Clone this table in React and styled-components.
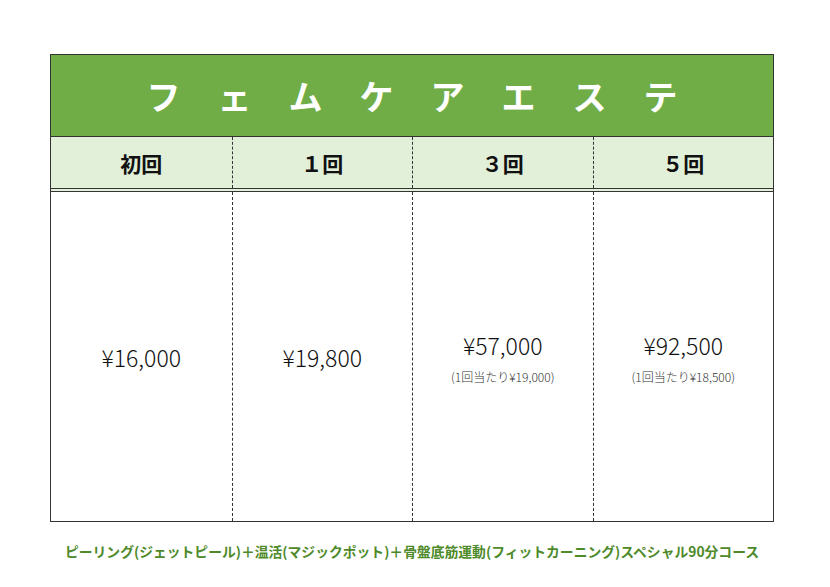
import React from 'react';
import styled, { createGlobalStyle } from 'styled-components';

const GlobalStyle = createGlobalStyle`
	body {
		margin: 0;
		background: #ffffff;
		font-family: "Noto Sans CJK JP", "Noto Sans", sans-serif;
	}
`;

const Page = styled.div`
	width: 830px;
	height: 587px;
	padding: 54px 56px 0 50px;
	box-sizing: border-box;
	display: flex;
	flex-direction: column;
`;

const Table = styled.div`
	width: 724px;
	border: 1.5px solid #333;
	box-sizing: border-box;
`;

const Title = styled.div`
	height: 81px;
	background: #70ad47;
	color: #fff;
	display: flex;
	align-items: center;
	justify-content: center;
	font-size: 34px;
	font-weight: 700;
	letter-spacing: 37px;
	padding-left: 37px;
	box-sizing: border-box;
`;

const Row = styled.div`
	display: grid;
	grid-template-columns: repeat(4, 1fr);
	height: ${(p) => p.$h}px;
	background: ${(p) => p.$bg || '#fff'};
	border-top: ${(p) => p.$top || 'none'};
	border-bottom: ${(p) => p.$bottom || 'none'};
	box-sizing: border-box;
`;

const Cell = styled.div`
	display: flex;
	flex-direction: column;
	align-items: center;
	justify-content: center;
	border-left: ${(p) => (p.$first ? 'none' : '1px dashed #333')};
`;

const Head = styled.span`
	font-size: 21px;
	font-weight: 700;
	color: #111;
`;

const Price = styled.span`
	font-size: 23px;
	font-weight: 300;
	color: #111;
`;

const Note = styled.span`
	font-size: 12px;
	font-weight: 300;
	color: #333;
	margin-top: 6px;
`;

const Footer = styled.div`
	margin-top: 19px;
	width: 724px;
	text-align: center;
	color: #4e8a2a;
	font-size: 13.8px;
	font-weight: 700;
`;

const cols = [
	{ head: '初回', price: '¥16,000' },
	{ head: '１回', price: '¥19,800' },
	{ head: '３回', price: '¥57,000', note: '(1回当たり¥19,000)' },
	{ head: '５回', price: '¥92,500', note: '(1回当たり¥18,500)' },
];

export default function App() {
	return (
		<Page>
			<GlobalStyle />
			<Table>
				<Title>フェムケアエステ</Title>
				<Row $h={56} $bg="#e2efd9" $top="1.5px solid #333" $bottom="4px double #333">
					{cols.map((c, i) => (
						<Cell key={c.head} $first={i === 0}>
							<Head>{c.head}</Head>
						</Cell>
					))}
				</Row>
				<Row $h={329}>
					{cols.map((c, i) => (
						<Cell key={c.head} $first={i === 0}>
							<Price>{c.price}</Price>
							{c.note && <Note>{c.note}</Note>}
						</Cell>
					))}
				</Row>
			</Table>
			<Footer>ピーリング(ジェットピール)＋温活(マジックポット)＋骨盤底筋運動(フィットカーニング)スペシャル90分コース</Footer>
		</Page>
	);
}
